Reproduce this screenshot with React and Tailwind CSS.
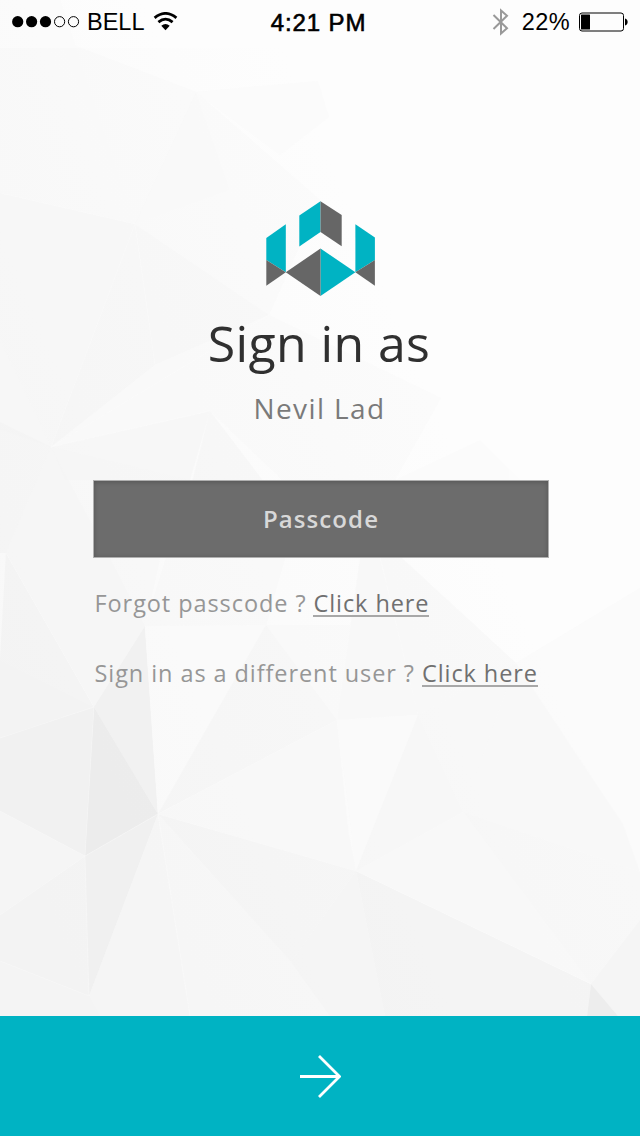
import React from "react";

const facets = [
  // upper left
  ["0,0 60,0 135,224 0,193", "#f6f6f6", 0.45],
  ["60,40 196,92 135,224", "#f7f7f7", 0.5],
  ["196,92 230,190 135,224", "#f4f4f4", 0.35],
  ["196,92 320,200 269,315 135,224", "#f7f7f7", 0.5],
  ["196,92 318,81 329,117 280,155", "#fafafa", 0.5],
  ["0,193 135,224 51,447 0,340", "#f3f3f3", 0.55],
  ["135,224 155,365 51,447", "#f0f0f0", 0.55],
  ["135,224 269,315 155,365", "#f3f3f3", 0.6],
  ["269,315 155,365 51,447", "#f8f8f8", 0.7],
  ["269,315 441,398 395,480 282,480 210,411 51,447", "#f8f8f8", 0.6],
  ["51,447 210,411 190,480 65,480", "#f2f2f2", 0.5],
  ["210,411 270,490 190,490", "#efefef", 0.45],
  ["0,340 51,447 0,430", "#f4f4f4", 0.6],
  ["0,422 51,447 6,553 0,553", "#f0f0f0", 0.6],
  ["51,447 110,558 145,626 94,707 6,553", "#f1f1f1", 0.6],
  ["51,447 190,480 160,558 145,626 110,558", "#f4f4f4", 0.55],
  ["190,480 285,558 266,625 145,626", "#f6f6f6", 0.65],
  ["480,440 520,480 395,480", "#f9f9f9", 0.3],
  // lower left
  ["6,553 94,707 0,660", "#efefef", 0.8],
  ["0,660 94,707 0,738", "#eeeeee", 0.8],
  ["0,738 94,707 85,856 0,811", "#ebebeb", 0.85],
  ["145,626 158,814 94,707", "#eaeaea", 0.9],
  ["94,707 158,814 85,856", "#e4e4e4", 0.95],
  ["0,811 85,856 0,915", "#f2f2f2", 0.8],
  ["0,915 85,856 89,996 0,961", "#eeeeee", 0.7],
  ["85,856 158,814 89,996", "#e9e9e9", 0.9],
  ["0,961 89,996 100,1016 0,1016", "#efefef", 0.7],
  // lower middle
  ["145,626 266,625 158,814", "#f9f9f9", 0.9],
  ["266,625 337,720 158,814", "#f3f3f3", 0.85],
  ["337,720 349,835 356,871 158,814", "#f6f6f6", 0.9],
  ["158,814 356,871 291,962", "#f1f1f1", 0.85],
  ["158,814 291,962 330,1016 190,1016", "#f4f4f4", 0.85],
  ["158,814 190,1016 89,1016 89,996", "#f2f2f2", 0.8],
  ["356,871 385,1016 330,1016 291,962", "#f1f1f1", 0.9],
  ["356,871 591,984 587,1016 385,1016", "#eeeeee", 0.9],
  ["266,625 350,625 337,720", "#f8f8f8", 0.7],
  ["360,558 380,558 418,715 337,720", "#f5f5f5", 0.7],
  ["380,556 402,558 516,663 418,715", "#f5f5f5", 0.7],
  ["337,720 418,715 356,871", "#fafafa", 0.9],
  ["418,715 463,812 356,871", "#f3f3f3", 0.85],
  ["418,715 516,663 463,812", "#f4f4f4", 0.85],
  ["516,663 623,824 640,872 463,812", "#f4f4f4", 0.85],
  ["463,812 591,984 356,871", "#f6f6f6", 0.9],
  ["463,812 640,872 640,920 591,984", "#f2f2f2", 0.8],
  ["516,663 640,588 640,872 623,824", "#f8f8f8", 0.7],
  ["591,984 640,920 640,1016 618,1016", "#eeeeee", 0.85],
  ["591,984 618,1016 587,1016", "#e3e3e3", 0.95],
];

function Background() {
  return (
    <svg
      className="absolute inset-0 h-full w-full"
      viewBox="0 0 640 1136"
      aria-hidden="true"
    >
      <defs>
        <linearGradient id="base" x1="0" y1="0.7" x2="0.6" y2="0.25">
          <stop offset="0" stopColor="#f8f8f8" />
          <stop offset="1" stopColor="#fdfdfd" />
        </linearGradient>
      </defs>
      <rect width="640" height="1136" fill="url(#base)" />
      <g opacity="0.6">
        {facets.map(([points, fill, opacity]) => (
          <polygon key={points} points={points} fill={fill} fillOpacity={opacity} />
        ))}
      </g>
      <g fill="none" stroke="#ffffff" strokeOpacity="0.3" strokeWidth="0.8">
        <path d="M0 193L135 224L51 447L269 315M51 447L210 411M135 224L155 365M6 553L94 707L0 738M145 626H266M145 626L158 814L85 856L0 915M94 707L85 856L89 996L0 961M158 814L190 1016M158 814L356 871L591 984M158 814L337 720L349 835M0 811L85 856" />
      </g>
      <rect width="640" height="48" fill="#ffffff" fillOpacity="0.3" />
    </svg>
  );
}

function StatusBar() {
  return (
    <header className="grid h-[44px] grid-cols-3 items-center pl-[12px] pr-[11px] font-['Liberation_Sans',sans-serif] text-[23.5px] leading-none text-black">
      <div className="flex items-center">
        <svg className="h-[12px] w-[68px]" viewBox="0 0 68 12">
          <circle cx="5.7" cy="5.7" r="5.6" />
          <circle cx="19.6" cy="5.7" r="5.6" />
          <circle cx="33.5" cy="5.7" r="5.6" />
          <circle cx="47.6" cy="5.7" r="5.1" fill="none" stroke="#000" />
          <circle cx="61.5" cy="5.7" r="5.1" fill="none" stroke="#000" />
        </svg>
        <span className="ml-[7px] w-[59px] pt-[2px]">BELL</span>
        <svg className="ml-[7px] -mt-px h-[19px] w-[25px]" viewBox="0 0 25 19">
          <path d="M1.6 5.8Q12.5 -3 23.4 5.8" fill="none" stroke="#000" strokeWidth="2.8" />
          <path d="M5.4 10.1Q12.5 4.2 19.6 10.1" fill="none" stroke="#000" strokeWidth="2.8" />
          <path d="M8.3 13.7Q12.5 10.2 16.7 13.7L12.5 18.2Z" />
        </svg>
      </div>
      <div className="pr-[4px] pt-[2px] text-center text-[24px] tracking-[0.9px] [-webkit-text-stroke:0.6px_#000]">4:21 PM</div>
      <div className="flex items-center justify-end">
        <svg className="h-[28px] w-[17px]" viewBox="0 0 17 28" fill="none" stroke="#999" strokeWidth="2">
          <path d="M1.5 7L15 20.2L9 25.5V2.5L15 7.8L1.5 21" />
        </svg>
        <span className="ml-[13px] pt-[2px] tracking-[0.4px]">22%</span>
        <svg className="ml-[8px] -mt-px h-[20px] w-[51px]" viewBox="0 0 51 20">
          <rect x="1.5" y="1" width="44" height="18" rx="2.5" fill="none" stroke="#000" />
          <rect x="3" y="2.5" width="9" height="15" rx="0.5" />
          <path d="M47 6.5C50.5 7 50.5 13 47 13.5Z" />
        </svg>
      </div>
    </header>
  );
}

function Logo() {
  return (
    <svg className="h-[96px] w-[110px]" viewBox="0 0 110 96" role="img" aria-label="Logo">
      <g fill="#00b3c3">
        <path d="M34.3 14.5L55.5 0.2V31L34.3 45.5Z" />
        <path d="M1.3 37L20.8 23.3V71.3L1.3 59Z" />
        <path d="M90.4 23.3L109.9 36.5V59L90.4 71.3Z" />
        <path d="M55.5 47.5L90.4 71.3L55.5 95Z" />
      </g>
      <g fill="#666">
        <path d="M55.5 0.2L76.7 14V45.2L55.5 31Z" />
        <path d="M1.3 59L20.8 71.3L1.3 84.7Z" />
        <path d="M109.9 59L90.4 71.3L109.9 84.7Z" />
        <path d="M55.5 47.5L20.8 71.3L55.5 95Z" />
      </g>
    </svg>
  );
}

function Prompt({ children }) {
  return (
    <p className="flex h-[32px] items-start leading-[32px]">
      <span className="whitespace-pre">{children} ? </span>
      <a href="#" className="h-[30px] border-b-2 border-[#a8a8a8] text-[#707070]">
        Click here
      </a>
    </p>
  );
}

export default function App() {
  return (
    <div className="relative h-[1136px] w-[640px] overflow-hidden bg-[#fbfbfb] font-['Open_Sans',sans-serif]">
      <Background />
      <div className="relative flex h-full flex-col">
        <StatusBar />
        <main className="flex flex-1 flex-col items-center pt-[157px]">
          <Logo />
          <h1 className="mt-[12px] mr-[2px] text-[50px] leading-[68px] tracking-[0.4px] text-[#303030]">
            Sign in as
          </h1>
          <h2 className="mt-[12px] mr-px text-[28px] leading-[38px] tracking-[1.4px] text-[#7a7a7a]">
            Nevil Lad
          </h2>
          <input
            type="text"
            placeholder="Passcode"
            className="mt-[53px] ml-[2px] h-[78px] w-[456px] border border-[#b0b0b0] bg-[#6c6c6c] pb-[2px] text-center text-[24px] font-semibold tracking-[1.1px] shadow-[inset_0_1px_5px_rgba(0,0,0,0.22)] placeholder:text-[#d8d8d8]"
          />
          <div className="mt-[29px] ml-[94.5px] flex w-[452px] flex-col gap-[38px] self-start whitespace-nowrap text-[23.5px] tracking-[0.92px] text-[#969696]">
            <Prompt>Forgot passcode</Prompt>
            <Prompt>Sign in as a different user</Prompt>
          </div>
        </main>
        <button
          aria-label="Continue"
          className="flex h-[120px] items-center justify-center bg-[#00b3c3]"
        >
          <svg className="h-[44px] w-[42px]" viewBox="0 0 42 44" fill="none" stroke="#fff" strokeWidth="2.8">
            <path d="M1 22.5H41M20 2L40.5 22.5L20 43" />
          </svg>
        </button>
      </div>
    </div>
  );
}
